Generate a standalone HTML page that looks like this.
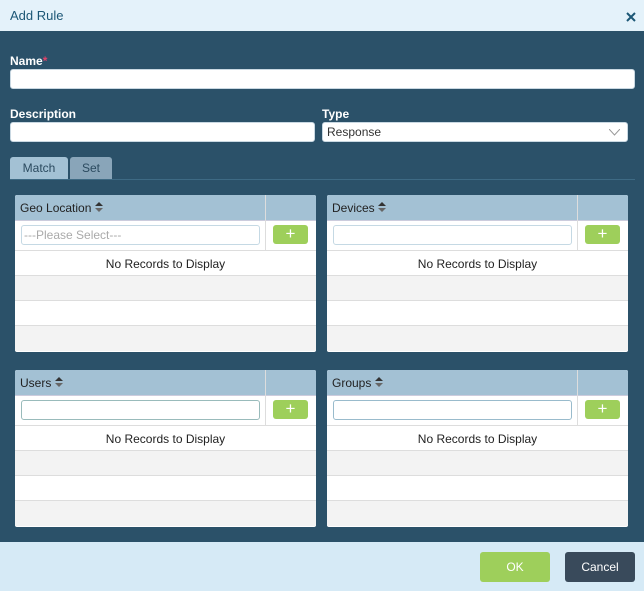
<!DOCTYPE html><html><head><style>
*{box-sizing:border-box;margin:0;padding:0}
body{width:644px;height:591px;background:#2b5169;font-family:"Liberation Sans",sans-serif;font-size:12px;position:relative;overflow:hidden}
.a{position:absolute}
.hd{left:0;top:0;width:644px;height:31px;background:#e4f2fa;color:#1c5776;font-size:13px;padding:8px 0 0 10px}
.lbl{color:#fff;font-weight:bold;font-size:12px}
.inp{background:#fff;border:1px solid #c9d8e2;border-radius:3px}
.tab{height:22px;top:157px;border-radius:3px 3px 0 0;color:#2b4a5f;font-size:12px;text-align:center;padding-top:4px}
.g{background:#fff;width:301px;height:157px;border-radius:2px;overflow:hidden}
.gh{height:26px;background:#a3c1d4;border-bottom:1px solid #ccd;position:relative;color:#222;padding:6px 0 0 5px}
.gh:after{content:"";position:absolute;left:250px;top:0;width:1px;height:26px;background:#ddd}
.fr{height:30px;border-bottom:1px solid #ddd;position:relative}
.fr:after{content:"";position:absolute;left:250px;top:0;width:1px;height:29px;background:#ddd}
.fi{position:absolute;left:6px;top:4px;width:239px;height:20px;border:1px solid #c5d9e4;border-radius:3px;color:#aaa;padding:2px 2px}
.pb{position:absolute;left:258px;top:4px;width:35px;height:19px;background:#9ecf5b;border-radius:3px;color:#fff;text-align:center;font-size:17px;line-height:18px}
.r{height:25px;border-bottom:1px solid #ddd}
.r.e{background:#f3f3f3;text-align:center;line-height:24px}
.r.n{text-align:center;line-height:26px;color:#222;background:#fff}
</style></head><body>
<div class="a hd">Add Rule</div>
<svg class="a" style="left:626px;top:12px" width="10" height="10"><path d="M1 1L9 9M9 1L1 9" stroke="#1c5776" stroke-width="2"/></svg>
<div class="a lbl" style="left:10px;top:54px">Name<span style="color:#e0436a">*</span></div>
<div class="a inp" style="left:10px;top:69px;width:625px;height:20px"></div>
<div class="a lbl" style="left:10px;top:107px">Description</div>
<div class="a inp" style="left:10px;top:122px;width:305px;height:20px"></div>
<div class="a lbl" style="left:322px;top:107px">Type</div>
<div class="a inp" style="left:322px;top:122px;width:306px;height:20px;padding:2px 4px;color:#333">Response<svg class="a" style="right:7px;top:6px" width="11" height="7"><path d="M0 0L5.5 6L11 0" stroke="#999" fill="none"/></svg></div>
<div class="a tab" style="left:10px;width:58px;background:#a3c1d4">Match</div>
<div class="a tab" style="left:70px;width:42px;background:#89a5b9">Set</div>
<div class="a" style="left:10px;top:179px;width:625px;height:1px;background:#3e6a84"></div>

<div class="a g" style="left:15px;top:195px"><div class="gh">Geo Location <svg width="8" height="10"><path d="M0 4L4 0L8 4Z" fill="#333"/><path d="M0 6L4 10L8 6Z" fill="#666"/></svg></div><div class="fr"><div class="fi">---Please Select---</div><div class="pb">+</div></div><div class="r n">No Records to Display</div><div class="r e"></div><div class="r n"></div><div class="r e" style="border:0"></div></div>
<div class="a g" style="left:327px;top:195px"><div class="gh">Devices <svg width="8" height="10"><path d="M0 4L4 0L8 4Z" fill="#333"/><path d="M0 6L4 10L8 6Z" fill="#666"/></svg></div><div class="fr"><div class="fi"></div><div class="pb">+</div></div><div class="r n">No Records to Display</div><div class="r e"></div><div class="r n"></div><div class="r e" style="border:0"></div></div>
<div class="a g" style="left:15px;top:370px"><div class="gh">Users <svg width="8" height="10"><path d="M0 4L4 0L8 4Z" fill="#333"/><path d="M0 6L4 10L8 6Z" fill="#666"/></svg></div><div class="fr"><div class="fi" style="border-color:#9bb"></div><div class="pb">+</div></div><div class="r n">No Records to Display</div><div class="r e"></div><div class="r n"></div><div class="r e" style="border:0"></div></div>
<div class="a g" style="left:327px;top:370px"><div class="gh">Groups <svg width="8" height="10"><path d="M0 4L4 0L8 4Z" fill="#333"/><path d="M0 6L4 10L8 6Z" fill="#666"/></svg></div><div class="fr"><div class="fi" style="border-color:#9bc"></div><div class="pb">+</div></div><div class="r n">No Records to Display</div><div class="r e"></div><div class="r n"></div><div class="r e" style="border:0"></div></div>

<div class="a" style="left:0;top:542px;width:644px;height:49px;background:#d6eaf6"></div>
<div class="a" style="left:480px;top:552px;width:70px;height:30px;background:#9ecf5b;border-radius:3px;color:#fff;text-align:center;line-height:30px">OK</div>
<div class="a" style="left:565px;top:552px;width:70px;height:30px;background:#394a5b;border-radius:3px;color:#fff;text-align:center;line-height:30px">Cancel</div>
</body></html>
